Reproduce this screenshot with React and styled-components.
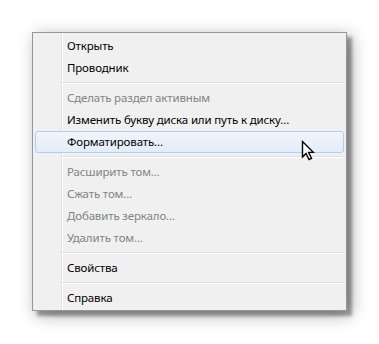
import React from "react";
import styled, { createGlobalStyle } from "styled-components";

const GlobalStyle = createGlobalStyle`
  html, body {
    margin: 0;
    padding: 0;
    background: #fff;
  }
`;

const Page = styled.div`
  padding: 32px;
  width: 379px;
  height: 344px;
  box-sizing: border-box;
`;

const Menu = styled.div`
  position: relative;
  width: 315px;
  box-sizing: border-box;
  border: 1px solid #979797;
  padding: 2px 0 1px;
  background:
    linear-gradient(
      to right,
      transparent 28px,
      #e2e3e3 28px,
      #e2e3e3 29px,
      #ffffff 29px,
      #ffffff 30px,
      transparent 30px
    ),
    #f0f0f0;
  box-shadow: 5px 5px 3px rgba(0, 0, 0, 0.33), 4px 4px 16px rgba(0, 0, 0, 0.35);
  font-family: "Noto Sans", "Open Sans", sans-serif;
  font-size: 11.5px;
  letter-spacing: -0.15px;
`;

const Item = styled.div`
  height: 22px;
  box-sizing: border-box;
  margin: 0 2px;
  padding-left: 31px;
  line-height: 20px;
  border: 1px solid ${(p) => (p.$active ? "#aecff5" : "transparent")};
  border-radius: 3px;
  background: ${(p) =>
    p.$active ? "linear-gradient(#f1f5fb, #e4ecf8)" : "transparent"};
  color: ${(p) => (p.$disabled ? "#838383" : "#000")};
  white-space: nowrap;
`;

const Separator = styled.div`
  height: 8px;
  margin: 0 2px 0 29px;
  display: flex;
  flex-direction: column;
  justify-content: center;

  &::before {
    content: "";
    height: 1px;
    background: #e0e0e0;
  }
  &::after {
    content: "";
    height: 1px;
    background: #ffffff;
  }
`;

const Cursor = styled.svg`
  position: absolute;
  left: 268px;
  top: 107px;
`;

const items = [
  { label: "Открыть" },
  { label: "Проводник" },
  "sep",
  { label: "Сделать раздел активным", disabled: true },
  { label: "Изменить букву диска или путь к диску..." },
  { label: "Форматировать...", active: true },
  "sep",
  { label: "Расширить том...", disabled: true },
  { label: "Сжать том...", disabled: true },
  { label: "Добавить зеркало...", disabled: true },
  { label: "Удалить том...", disabled: true },
  "sep",
  { label: "Свойства" },
  "sep",
  { label: "Справка" },
];

const App = () => {
  return (
    <>
      <GlobalStyle />
      <Page>
        <Menu>
          {items.map((it, i) =>
            it === "sep" ? (
              <Separator key={i} />
            ) : (
              <Item key={i} $disabled={it.disabled} $active={it.active}>
                {it.label}
              </Item>
            )
          )}
          <Cursor width="14" height="21" viewBox="0 0 14 21">
            <path
              d="M1.5 1.5 L1.5 17 L5 13.5 L8 19.5 L10.5 18.3 L7.6 12.4 L12.5 12.4 Z"
              fill="#fff"
              stroke="#000"
              strokeWidth="1.4"
              strokeLinejoin="miter"
            />
          </Cursor>
        </Menu>
      </Page>
    </>
  );
};

export default App;
